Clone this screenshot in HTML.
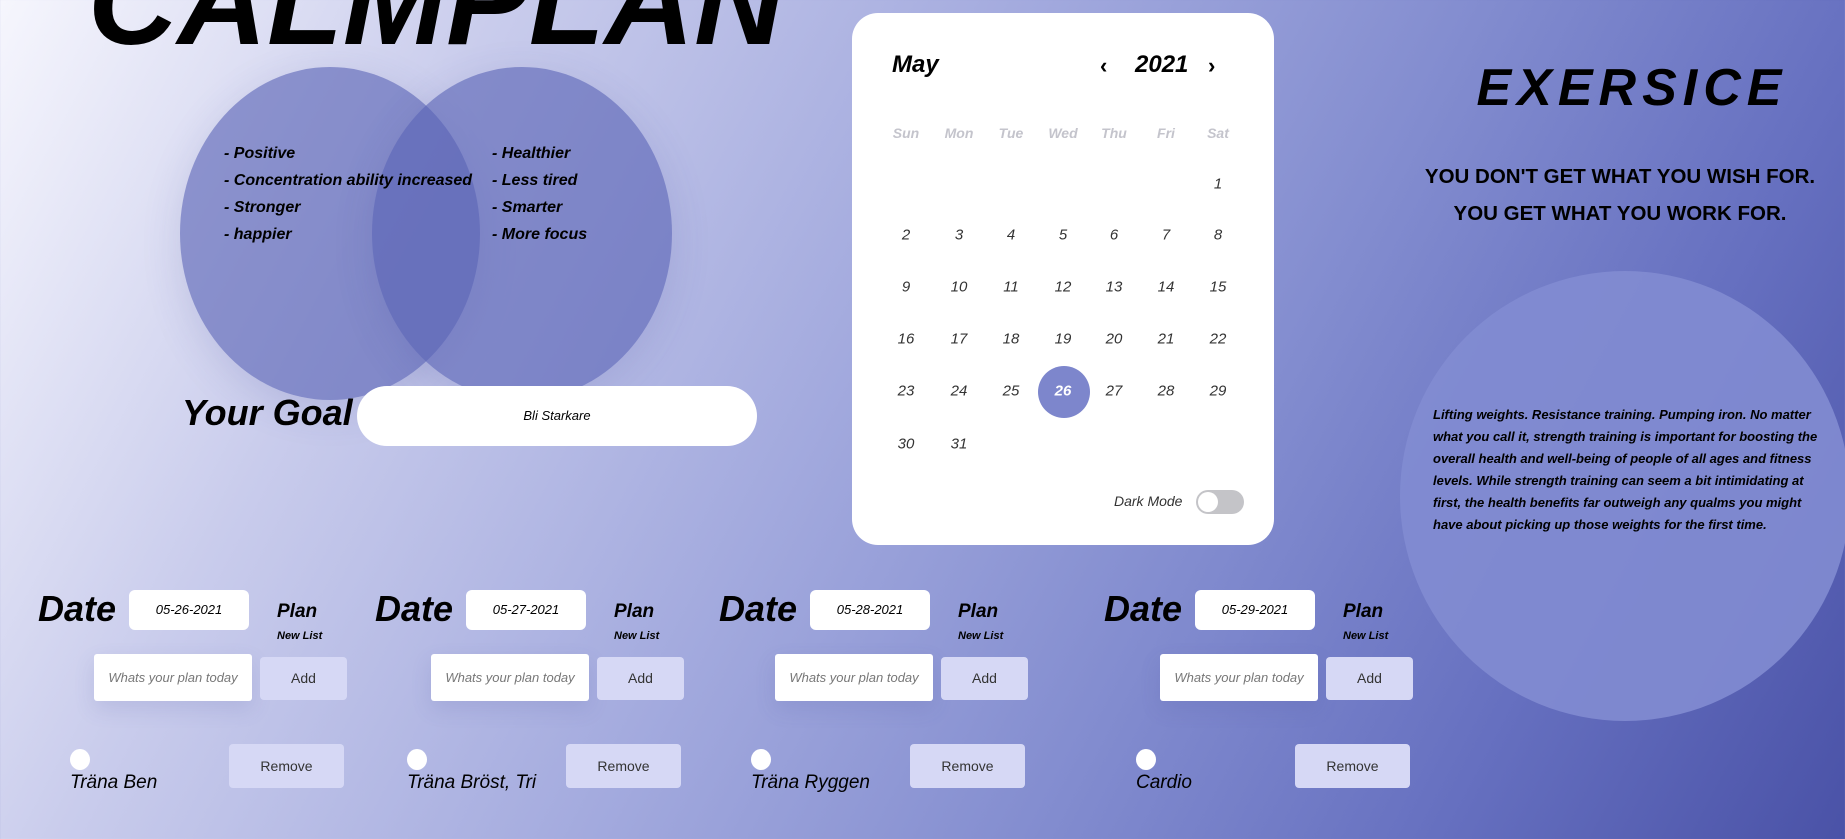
<!DOCTYPE html>
<html><head><meta charset="utf-8">
<style>
*{margin:0;padding:0;box-sizing:border-box}
html,body{width:1845px;height:839px;overflow:hidden}
body{position:relative;font-family:"Liberation Sans",sans-serif;color:#000;
background:linear-gradient(118deg,#f6f6fd 0%,#c9ccec 22%,#a3aade 45%,#828ccf 65%,#6670c0 82%,#4a52a7 100%);}
.abs{position:absolute}
.title{left:88px;top:-60px;font-size:124px;font-weight:bold;font-style:italic;letter-spacing:0px;line-height:1;white-space:nowrap}
.ell{position:absolute;width:300px;height:333px;border-radius:50%;background:rgba(88,98,180,0.62);box-shadow:0 10px 40px rgba(60,70,150,0.15)}
.list{font-size:16px;font-weight:bold;font-style:italic;line-height:27px;white-space:nowrap}
.goal{left:182px;top:392px;font-size:36px;font-weight:bold;font-style:italic}
.goalin{left:357px;top:386px;width:400px;height:60px;border-radius:30px;background:#fff;font-size:13px;text-align:center;line-height:60px;font-style:italic}
.cal{left:852px;top:13px;width:422px;height:532px;border-radius:26px;background:#fff}
.c{position:absolute;width:40px;text-align:center;font-size:15px;font-style:italic;color:#333;transform:translate(-50%,-50%)}
.wd{color:#c4c4cc;font-weight:bold;font-size:14px}
.ex{left:1462px;top:58px;width:340px;text-align:center;font-size:52px;font-weight:bold;font-style:italic;letter-spacing:6px}
.quote{left:1385px;top:158px;width:470px;text-align:center;font-size:20.5px;font-weight:bold;line-height:37px}
.big{left:1400px;top:271px;width:450px;height:450px;border-radius:50%;background:rgba(130,140,210,0.9)}
.btext{left:1433px;top:404px;width:385px;font-size:13px;font-weight:bold;font-style:italic;line-height:22px}
.date{font-size:36px;font-weight:bold;font-style:italic;top:588px}
.din{width:120px;height:40px;background:#fff;border-radius:6px;top:590px;font-size:13px;text-align:center;line-height:40px;font-style:italic}
.plan{top:601px;font-size:19px;font-weight:bold;font-style:italic}
.nl{top:630px;font-size:11px;font-weight:bold;font-style:italic}
.win{width:158px;height:47px;background:#fff;border-radius:3px;top:654px;font-size:13px;color:#777;font-style:italic;text-align:center;line-height:47px;box-shadow:0 8px 20px rgba(80,90,160,0.15)}
.btn{background:#d6d8f5;border-radius:4px;text-align:center;color:#333;font-size:14px}
.add{width:87px;height:43px;top:657px;line-height:43px}
.rm{width:115px;height:44px;top:744px;line-height:44px}
.rad{width:20px;height:21px;border-radius:50%;background:#fff;top:749px}
.item{top:772px;font-size:19px;font-style:italic;white-space:nowrap}
</style></head><body>
<div class="abs title">CALMPLAN</div>
<div class="ell" style="left:180px;top:67px"></div>
<div class="ell" style="left:372px;top:67px"></div>
<div class="abs list" style="left:224px;top:140px">- Positive<br>- Concentration ability increased<br>- Stronger<br>- happier</div>
<div class="abs list" style="left:492px;top:140px">- Healthier<br>- Less tired<br>- Smarter<br>- More focus</div>
<div class="abs goal">Your Goal</div>
<div class="abs goalin">Bli Starkare</div>

<div class="abs cal">
<div class="abs" style="left:40px;top:38px;font-size:24px;font-weight:bold;font-style:italic">May</div>
<div class="abs" style="left:248px;top:40px;font-size:22px;font-weight:bold">&lsaquo;</div>
<div class="abs" style="left:283px;top:38px;font-size:24px;font-weight:bold;font-style:italic">2021</div>
<div class="abs" style="left:356px;top:40px;font-size:22px;font-weight:bold">&rsaquo;</div>
<div class="abs" style="left:186px;top:353px;width:52px;height:52px;border-radius:50%;background:#7d86cc"></div>
<div id="days"></div>
<div class="abs" style="left:262px;top:480px;font-size:14px;font-style:italic;color:#333">Dark Mode</div>
<div class="abs" style="left:344px;top:477px;width:48px;height:24px;border-radius:12px;background:#c4c4c8"><div style="position:absolute;left:2px;top:2px;width:20px;height:20px;border-radius:50%;background:#fff"></div></div>
</div>

<div class="abs ex">EXERSICE</div>
<div class="abs quote">YOU DON'T GET WHAT YOU WISH FOR.<br>YOU GET WHAT YOU WORK FOR.</div>
<div class="abs big"></div>
<div class="abs btext">Lifting weights. Resistance training. Pumping iron. No matter what you call it, strength training is important for boosting the overall health and well-being of people of all ages and fitness levels. While strength training can seem a bit intimidating at first, the health benefits far outweigh any qualms you might have about picking up those weights for the first time.</div>

<div id="groups"></div>
<script>
var xs=[54,107,159,211,262,314,366],ys=[171,222,274,326,378,431];
var h='',wd=['Sun','Mon','Tue','Wed','Thu','Fri','Sat'];
for(var i=0;i<7;i++)h+='<div class="c wd" style="left:'+xs[i]+'px;top:120px">'+wd[i]+'</div>';
for(var d=1;d<=31;d++){var p=d+5,r=Math.floor(p/7),c=p%7;
h+='<div class="c" style="left:'+xs[c]+'px;top:'+ys[r]+'px;'+(d==26?'color:#fff;font-weight:bold':'')+'">'+d+'</div>';}
document.getElementById('days').innerHTML=h;
var dx=[0,337,681,1066],dates=['05-26-2021','05-27-2021','05-28-2021','05-29-2021'],items=['Träna Ben','Träna Bröst, Tri','Träna Ryggen','Cardio'];
var g='';
for(var k=0;k<4;k++){var o=dx[k];
g+='<div class="abs date" style="left:'+(38+o)+'px">Date</div>'+
'<div class="abs din" style="left:'+(129+o)+'px">'+dates[k]+'</div>'+
'<div class="abs plan" style="left:'+(277+o)+'px">Plan</div>'+
'<div class="abs nl" style="left:'+(277+o)+'px">New List</div>'+
'<div class="abs win" style="left:'+(94+o)+'px">Whats your plan today</div>'+
'<div class="abs btn add" style="left:'+(260+o)+'px">Add</div>'+
'<div class="abs rad" style="left:'+(70+o)+'px"></div>'+
'<div class="abs item" style="left:'+(70+o)+'px">'+items[k]+'</div>'+
'<div class="abs btn rm" style="left:'+(229+o)+'px">Remove</div>';}
document.getElementById('groups').innerHTML=g;
</script>
</body></html>
